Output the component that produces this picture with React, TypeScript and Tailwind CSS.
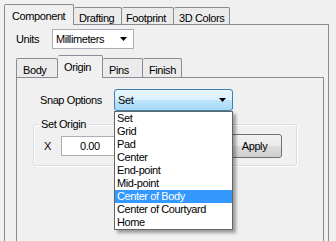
import React from "react";

const font = { fontFamily: '"Liberation Sans", Arial, sans-serif' };

function Arrow() {
  return (
    <svg width="7" height="4" viewBox="0 0 7 4" className="block">
      <path d="M0 0H7L3.5 4Z" fill="#000" />
    </svg>
  );
}

export default function App() {
  const items = [
    "Set",
    "Grid",
    "Pad",
    "Center",
    "End-point",
    "Mid-point",
    "Center of Body",
    "Center of Courtyard",
    "Home",
  ];
  return (
    <div
      className="w-[336px] h-[241px] bg-[#f0f0f0] overflow-hidden text-[11px] tracking-[-0.4px] text-black leading-[13px]"
      style={font}
    >
      <div className="pt-[4px] pl-[4px] pr-[7px] flex flex-col">
        {/* outer tabs */}
        <div className="flex items-end h-[20px] relative z-10">
          <div className="w-[70px] h-[21px] -mb-px border-l border-t border-r border-[#898c95] bg-[#f0f0f0] pl-[7px] pt-[5px] rounded-t-[2px]">
            Component
          </div>
          <div className="w-[48px] h-[17px] border-t border-r border-[#898c95] bg-[#ebebeb] pl-[5px] pt-[4px] rounded-t-[2px]">
            Drafting
          </div>
          <div className="w-[52px] h-[17px] border-t border-r border-[#898c95] bg-[#ebebeb] pl-[4px] pt-[4px] rounded-t-[2px]">
            Footprint
          </div>
          <div className="w-[56px] h-[17px] border-t border-r border-[#898c95] bg-[#ebebeb] pl-[5px] pt-[4px] rounded-t-[2px]">
            3D Colors
          </div>
        </div>
        {/* outer panel */}
        <div className="h-[230px] border-l border-t border-r border-[#898c95] bg-[#f0f0f0] pl-[11px] pr-[4px] pt-[4px]">
          <div className="flex items-center h-[20px]">
            <div className="w-[36px]">Units</div>
            <div className="w-[82px] h-[20px] border border-[#abadb3] bg-white flex items-center justify-between pl-[3px] pr-[6px]">
              <span>Millimeters</span>
              <Arrow />
            </div>
          </div>
          {/* inner tabs */}
          <div className="mt-[6px] flex items-end h-[22px] relative z-10">
            <div className="w-[42px] h-[19px] border-l border-t border-r border-[#898c95] bg-[#ebebeb] pl-[6px] pt-[5px] rounded-t-[2px]">
              Body
            </div>
            <div className="w-[45px] h-[23px] -mb-px border-t border-r border-[#898c95] bg-[#f0f0f0] pl-[6px] pt-[5px] rounded-t-[2px]">
              Origin
            </div>
            <div className="w-[40px] h-[19px] border-t border-r border-[#898c95] bg-[#ebebeb] pl-[6px] pt-[5px] rounded-t-[2px]">
              Pins
            </div>
            <div className="w-[39px] h-[19px] border-t border-r border-[#898c95] bg-[#ebebeb] pl-[6px] pt-[5px] rounded-t-[2px]">
              Finish
            </div>
          </div>
          {/* inner panel */}
          <div className="w-[308px] h-[200px] border-l border-t border-r border-[#898c95] bg-[#f0f0f0] pt-[11px]">
            <div className="flex items-center h-[22px] pl-[23px] relative z-20">
              <div className="w-[74px]">Snap Options</div>
              <div className="relative">
                <div className="w-[119px] h-[22px] border border-[#3c7fb1] rounded-[3px] bg-[linear-gradient(#eaf6fd_0%,#d9f0fc_50%,#bee6fd_50%,#a7d9f5_100%)] flex items-center justify-between pl-[3px] pr-[6px]">
                  <span>Set</span>
                  <Arrow />
                </div>
                <div className="absolute left-0 top-full w-[119px] border border-[#646464] bg-white shadow-[3px_3px_3px_rgba(0,0,0,0.35)]">
                  {items.map((it) => (
                    <div
                      key={it}
                      className={
                        it === "Center of Body"
                          ? "h-[13px] pl-[2px] bg-[#3399ff] text-white"
                          : "h-[13px] pl-[2px]"
                      }
                    >
                      {it}
                    </div>
                  ))}
                </div>
              </div>
            </div>
            {/* group box */}
            <div className="relative ml-[16px] mt-[13px] w-[264px] h-[42px] border border-[#d5dfe5] rounded-[3px] shadow-[inset_1px_1px_0_#ffffff,1px_1px_0_#ffffff]">
              <div className="absolute left-[5px] -top-[7px] px-[2px] bg-[#f0f0f0]">
                Set Origin
              </div>
              <div className="flex items-center pt-[9px] pl-[10px]">
                <div className="w-[17px]">X</div>
                <div className="w-[70px] h-[20px] border border-[#abadb3] bg-white pl-[18px] flex items-center">
                  0.00
                </div>
                <div className="ml-[96px] w-[55px] h-[24px] border border-[#707070] rounded-[3px] bg-[linear-gradient(#f2f2f2_0%,#ebebeb_50%,#dddddd_50%,#cfcfcf_100%)] flex items-center justify-center">
                  Apply
                </div>
              </div>
            </div>
          </div>
        </div>
      </div>
    </div>
  );
}
